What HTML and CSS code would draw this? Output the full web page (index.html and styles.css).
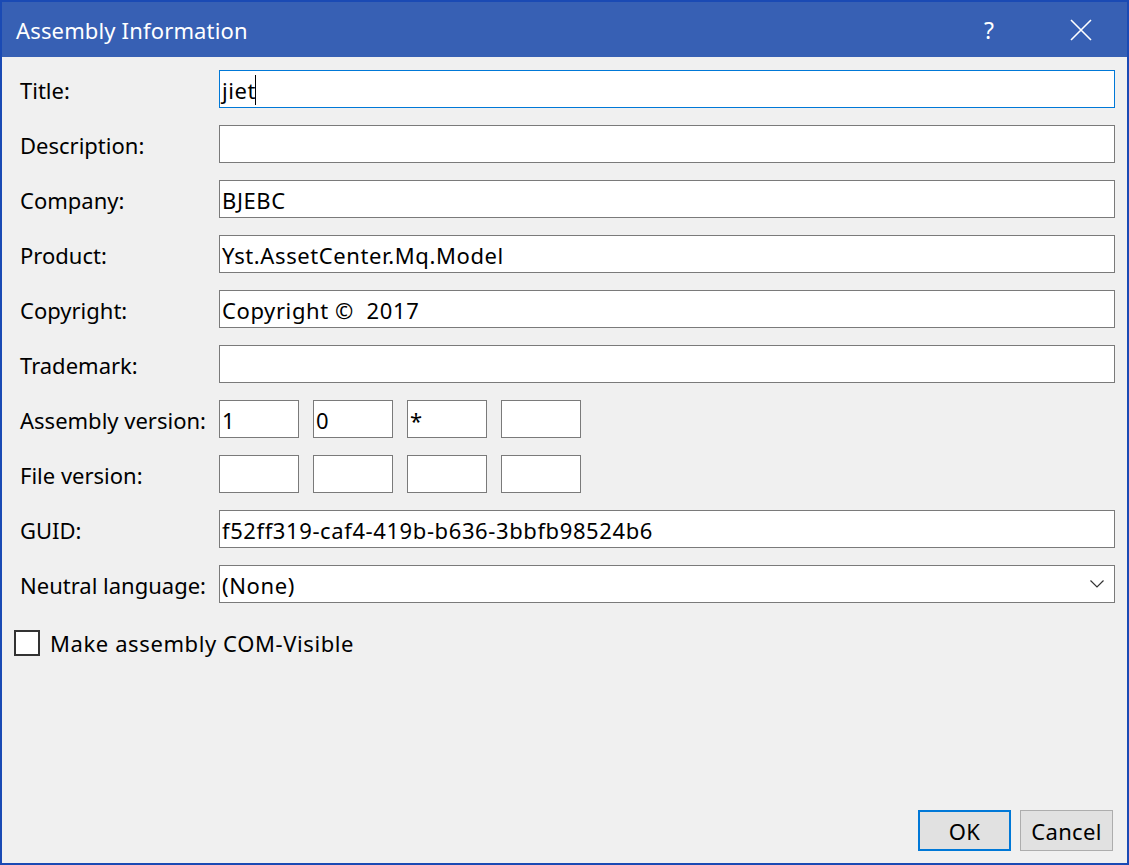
FILE: index.html
```html
<!DOCTYPE html>
<html>
<head>
<meta charset="utf-8">
<link rel="stylesheet" href="styles.css">
</head>
<body>
<div class="window">
  <div class="titlebar">
    <span class="title">Assembly Information</span>
    <div class="controls">
      <span class="help">?</span>
      <span class="close">
        <svg width="22" height="22" viewBox="0 0 22 22"><path d="M1 1 L21 21 M21 1 L1 21" stroke="#fff" stroke-width="1.6" fill="none"/></svg>
      </span>
    </div>
  </div>
  <div class="content">
    <div class="form">
      <div class="row"><span class="label">Title:</span><div class="field focus">jiet<span class="caret"></span></div></div>
      <div class="row"><span class="label">Description:</span><div class="field"></div></div>
      <div class="row"><span class="label">Company:</span><div class="field">BJEBC</div></div>
      <div class="row"><span class="label">Product:</span><div class="field">Yst.AssetCenter.Mq.Model</div></div>
      <div class="row"><span class="label">Copyright:</span><div class="field">Copyright ©&nbsp; 2017</div></div>
      <div class="row"><span class="label">Trademark:</span><div class="field"></div></div>
      <div class="row"><span class="label">Assembly version:</span>
        <div class="versions"><div class="field small">1</div><div class="field small">0</div><div class="field small">*</div><div class="field small"></div></div>
      </div>
      <div class="row"><span class="label">File version:</span>
        <div class="versions"><div class="field small"></div><div class="field small"></div><div class="field small"></div><div class="field small"></div></div>
      </div>
      <div class="row"><span class="label">GUID:</span><div class="field">f52ff319-caf4-419b-b636-3bbfb98524b6</div></div>
      <div class="row"><span class="label">Neutral language:</span>
        <div class="field select"><span>(None)</span>
          <svg width="14" height="8" viewBox="0 0 14 8"><path d="M0.5 0.5 L7 7 L13.5 0.5" stroke="#333" stroke-width="1.2" fill="none"/></svg>
        </div>
      </div>
    </div>
    <div class="check"><span class="box"></span><span>Make assembly COM-Visible</span></div>
    <div class="spacer"></div>
    <div class="buttons">
      <button class="btn default">OK</button>
      <button class="btn">Cancel</button>
    </div>
  </div>
</div>
</body>
</html>
```
FILE: styles.css
```css
* { box-sizing: border-box; }
html, body { margin: 0; padding: 0; }
body {
  width: 1129px;
  height: 865px;
  font-family: "Noto Sans", "Open Sans", sans-serif;
  font-size: 22px;
  letter-spacing: 0.2px;
  color: #000;
  overflow: hidden;
}
.window {
  width: 1129px;
  height: 865px;
  border: 2px solid #1a4ab4;
  display: flex;
  flex-direction: column;
  background: #f0f0f0;
}
.titlebar {
  height: 55px;
  background: #3760b4;
  color: #fff;
  display: flex;
  align-items: center;
  padding-left: 14px;
  flex-shrink: 0;
}
.title { font-size: 22px; letter-spacing: 0.15px; flex: 1; padding-top: 0; }
.controls { display: flex; align-items: center; }
.help { font-size: 23px; width: 92px; text-align: center; }
.close { width: 92px; display: flex; justify-content: center; align-items: center; }
.content {
  flex: 1;
  display: flex;
  flex-direction: column;
  padding: 13px 12px 12px 12px;
}
.form { display: flex; flex-direction: column; gap: 17px; }
.row { display: flex; align-items: center; height: 38px; }
.label { width: 205px; padding-left: 6px; padding-top: 1px; flex-shrink: 0; letter-spacing: 0; }
.field {
  flex: 1;
  height: 38px;
  background: #fff;
  border: 1px solid #7a7a7a;
  display: flex;
  align-items: center;
  padding-left: 2px;
  padding-top: 1px;
  white-space: pre;
  letter-spacing: 0.6px;
}
.field.focus { border-color: #0078d7; }
.caret { display: inline-block; width: 1px; height: 30px; background: #000; margin-left: -1px; }
.versions { display: flex; gap: 14px; }
.field.small { flex: none; width: 80px; }
.select { justify-content: space-between; padding-right: 10px; padding-top: 0; }
.select span { padding-top: 1px; }
.check {
  display: flex;
  align-items: center;
  margin-top: 26px;
  height: 28px;
  gap: 10px;
  letter-spacing: 0.6px;
}
.check span:last-child { padding-top: 0; }
.box {
  width: 26px;
  height: 26px;
  border: 2px solid #333;
  background: #fff;
  display: inline-block;
}
.spacer { flex: 1; }
.buttons { display: flex; justify-content: flex-end; gap: 9px; padding-right: 2px; }
.btn {
  width: 93px;
  height: 41px;
  background: #e1e1e1;
  border: 1px solid #adadad;
  font-family: inherit;
  font-size: 22px;
  letter-spacing: 0.3px;
  color: #000;
  padding: 1px 0 0 0;
}
.btn.default { border: 2px solid #0078d7; }
```
